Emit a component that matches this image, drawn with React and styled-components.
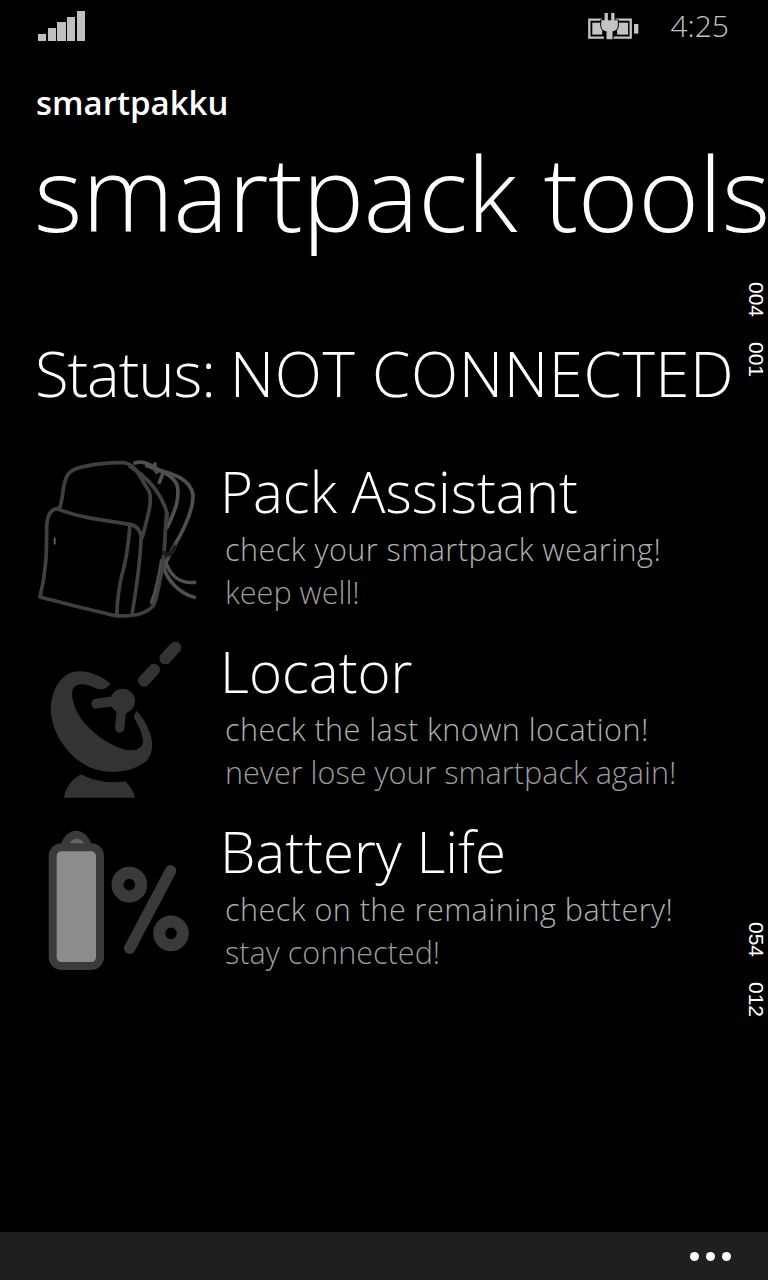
import React from "react";
import styled, { createGlobalStyle } from "styled-components";

const Global = createGlobalStyle`
  html, body { margin: 0; padding: 0; background: #000; }
  body { font-family: "Open Sans", "Noto Sans", sans-serif; color: #fff; }
`;

const Page = styled.div`
  position: relative;
  width: 768px;
  height: 1280px;
  overflow: hidden;
  background: #000;
  display: flex;
  flex-direction: column;
`;

const StatusBar = styled.div`
  height: 52px;
  display: flex;
  align-items: center;
  justify-content: space-between;
  padding: 0 39px 0 38px;
  flex: none;
`;

const StatusRight = styled.div`
  display: flex;
  align-items: center;
  gap: 30px;
`;

const Clock = styled.span`
  font-size: 30px;
  font-weight: 300;
  color: #c4c4c4;
  line-height: 52px;
`;

const Header = styled.header`
  padding: 31px 0 0 36px;
  flex: none;
`;

const AppName = styled.div`
  font-size: 33px;
  font-weight: 600;
  line-height: 40px;
`;

const PageTitle = styled.h1`
  margin: 0 0 0 -2px;
  padding-top: 9px;
  font-size: 104px;
  font-weight: 300;
  line-height: 120px;
  letter-spacing: -0.5px;
  white-space: nowrap;
`;

const Status = styled.div`
  margin: 79px 0 0 35px;
  font-size: 61.7px;
  font-weight: 300;
  line-height: 84px;
  white-space: nowrap;
  flex: none;
`;

const StatusLabel = styled.span`
  letter-spacing: -1.1px;
`;

const StatusValue = styled.span`
  letter-spacing: 0.6px;
`;

const List = styled.div`
  margin-top: 34px;
  display: flex;
  flex-direction: column;
  padding-left: 20px;
`;

const Row = styled.div`
  height: 180px;
  display: flex;
`;

const IconBox = styled.svg`
  width: 200px;
  height: 180px;
  flex: none;
  display: block;
`;

const RowText = styled.div`
  padding-top: 6px;
  min-width: 0;
`;

const RowTitle = styled.div`
  font-size: 56.4px;
  font-weight: 300;
  line-height: 73px;
  white-space: nowrap;
`;

const RowLine = styled.div`
  margin-left: 5px;
  font-size: 30.6px;
  font-weight: 300;
  line-height: 43px;
  letter-spacing: ${(p) => (p.$dim ? "0" : "0.45px")};
  color: ${(p) => (p.$dim ? "#9c9c9c" : "#b0b0b0")};
  white-space: nowrap;
`;

const Debug = styled.div`
  position: absolute;
  right: 1px;
  top: ${(p) => p.$top}px;
  writing-mode: vertical-rl;
  font-family: "Liberation Sans", sans-serif;
  font-size: 21px;
  line-height: 21px;
  white-space: nowrap;
  color: #fff;
`;

const AppBar = styled.div`
  margin-top: auto;
  height: 48px;
  background: #1f1f1f;
  display: flex;
  align-items: center;
  justify-content: flex-end;
  gap: 7px;
  padding-right: 37px;
  flex: none;
`;

const Dot = styled.span`
  width: 9px;
  height: 9px;
  border-radius: 50%;
  background: #fff;
`;

const Signal = () => (
  <svg width="48" height="32" viewBox="0 0 48 32" fill="#c0c0c0">
    <rect x="0" y="24" width="8" height="7" />
    <rect x="10" y="18" width="8" height="13" />
    <rect x="19" y="12" width="9" height="19" />
    <rect x="29" y="7" width="8" height="24" />
    <rect x="39" y="1" width="8" height="30" />
  </svg>
);

const Charging = () => (
  <svg width="53" height="28" viewBox="55 35 160 84">
    <g fill="none" stroke="#c4c4c4" strokeWidth="7">
      <path d="M100 58H62V112H106" />
      <path d="M138 58H187V112H134" />
    </g>
    <g fill="#c4c4c4">
      <rect x="71" y="67" width="30" height="36" />
      <rect x="146" y="67" width="33" height="36" />
      <rect x="197" y="71" width="13" height="29" />
    </g>
    <g fill="#c4c4c4" stroke="#000" strokeWidth="6" paintOrder="stroke">
      <path d="M108 38h10v22h10V38h10v22h10v16c0 10-8 16-16 17v24h-18V93c-8-1-16-7-16-17V60h10z" />
    </g>
  </svg>
);

const Pack = () => (
  <IconBox viewBox="0 0 600 540">
    <g fill="none" strokeLinecap="round" strokeLinejoin="round" strokeWidth="11">
      <g stroke="#4f4f4f">
        <path d="M345 42c25-8 45 5 70 20 40 12 95 25 104 75 2 50-30 110-60 160-10 20-20 40-28 60" />
        <path d="M380 50c25 10 70 20 90 55 12 40-5 80-28 130" />
        <path d="M405 45c-5 15 5 20 5 25M430 70l-12 30" />
        <path d="M425 335c-6 40-14 85-30 125" />
        <path d="M428 345c10 45 45 85 95 100" />
        <path d="M436 335c12 40 40 70 88 65" />
      </g>
      <g stroke="#404040">
        <path d="M118 178c14-30 6-70 26-102 10-14 30-20 50-24 40-8 85-12 118-11 20 3 30 14 44 34l30 50c8 14 5 30 3 50-6 30-14 60-22 90" />
        <path d="M330 52c40 25 70 55 90 90 15 30 25 50 20 70" />
        <path d="M110 179c60 25 140 35 220 47 22 4 34 22 33 42-2 70-14 150-26 222" />
        <path d="M110 179c-20 4-30 24-30 60 0 80-2 130-20 205 70 18 150 40 226 56 50 4 90-2 114-30 14-30 15-60 25-100 10-50 10-130 15-180" />
        <path d="M330 226c-5 55-8 100-24 150-10 40-14 80-16 122" />
      </g>
      <path d="M104 268v16" stroke="#6a6a6a" strokeWidth="5" />
      <path d="M432 312c10 8 22 8 32-18" stroke="#1d1d1d" strokeWidth="13" />
    </g>
  </IconBox>
);

const Dish = () => (
  <IconBox viewBox="0 0 600 540">
    <g fill="#333">
      <path d="M272 165C240 135 190 120 155 130 115 145 90 195 93 250c5 70 55 135 115 165 60 25 130 15 172-20 20-20 22-60 5-95-8-20-20-40-36-55l-8 20c16 25 28 55 28 75-3 20-25 30-60 20-50-15-95-50-125-90-25-35-35-80-22-95 12-15 40-10 70 5 20 5 30-5 40-15z" />
      <circle cx="308" cy="216" r="37" />
      <path d="M132 506c5-35 30-60 52-70 40 22 90 28 132 21 15 15 25 30 29 49z" />
    </g>
    <g stroke="#333" strokeLinecap="round" fill="none">
      <path d="M229 224l60-8" strokeWidth="30" />
      <path d="M299 297l6-60" strokeWidth="28" />
      <path d="M372 155l30-33" strokeWidth="36" />
      <path d="M436 88l30-32" strokeWidth="36" />
    </g>
  </IconBox>
);

const Battery = () => (
  <IconBox viewBox="0 -15 600 540">
    <path d="M122 92c8-26 26-42 46-42s38 16 48 42z" fill="#3a3a3a" />
    <path d="M148 90c6-12 14-16 22-16s16 4 24 16z" fill="#666" />
    <rect x="98" y="100" width="142" height="356" rx="26" fill="#8c8c8c" stroke="#3a3a3a" strokeWidth="24" />
    <g fill="none" stroke="#3a3a3a" strokeWidth="36">
      <circle cx="328" cy="212" r="35.5" />
      <circle cx="453" cy="358" r="35.5" />
    </g>
    <path d="M452 170L329 403" stroke="#3a3a3a" strokeWidth="34" strokeLinecap="round" />
  </IconBox>
);

const items = [
  { icon: <Pack />, title: "Pack Assistant", a: "check your smartpack wearing!", b: "keep well!" },
  { icon: <Dish />, title: "Locator", a: "check the last known location!", b: "never lose your smartpack again!" },
  { icon: <Battery />, title: "Battery Life", a: "check on the remaining battery!", b: "stay connected!" },
];

export default function App() {
  return (
    <Page>
      <Global />
      <StatusBar>
        <Signal />
        <StatusRight>
          <Charging />
          <Clock>4:25</Clock>
        </StatusRight>
      </StatusBar>
      <Header>
        <AppName>smartpakku</AppName>
        <PageTitle>smartpack tools</PageTitle>
      </Header>
      <Status>
        <StatusLabel>Status: </StatusLabel>
        <StatusValue>NOT CONNECTED</StatusValue>
      </Status>
      <List>
        {items.map((it) => (
          <Row key={it.title}>
            {it.icon}
            <RowText>
              <RowTitle>{it.title}</RowTitle>
              <RowLine>{it.a}</RowLine>
              <RowLine $dim>{it.b}</RowLine>
            </RowText>
          </Row>
        ))}
      </List>
      <Debug $top={282}>004</Debug>
      <Debug $top={342}>001</Debug>
      <Debug $top={922}>054</Debug>
      <Debug $top={982}>012</Debug>
      <AppBar>
        <Dot />
        <Dot />
        <Dot />
      </AppBar>
    </Page>
  );
}
